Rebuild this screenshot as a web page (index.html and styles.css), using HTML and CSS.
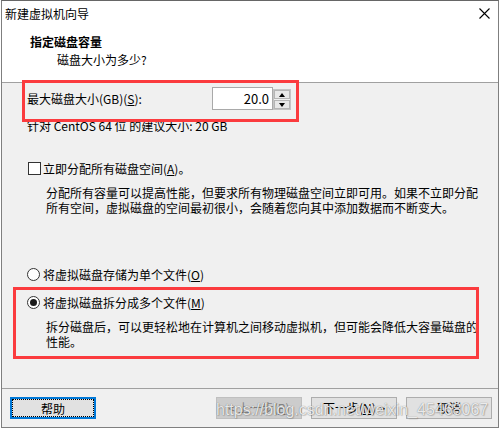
FILE: index.html
```html
<!DOCTYPE html>
<html lang="zh-CN">
<head>
<meta charset="utf-8">
<title>新建虚拟机向导</title>
<link rel="stylesheet" href="styles.css">
</head>
<body>
<div class="window">
  <div class="titlebar">
    <span class="title">新建虚拟机向导</span>
    <svg class="close" width="11" height="11" viewBox="0 0 11 11"><path d="M0.5 0.5L10.5 10.5M10.5 0.5L0.5 10.5" stroke="#000" stroke-width="1.1" fill="none"/></svg>
  </div>
  <div class="header">
    <div class="heading">指定磁盘容量</div>
    <div class="subheading">磁盘大小为多少?</div>
  </div>
  <div class="content">
    <div class="size-row">
      <span class="size-label">最大磁盘大小(GB)(<u>S</u>):</span>
      <div class="spin-input">20.0</div>
      <div class="spin-buttons">
        <div class="spin-btn"><span class="arrow-up"></span></div>
        <div class="spin-btn"><span class="arrow-down"></span></div>
      </div>
    </div>
    <div class="hint">针对 CentOS 64 位 的建议大小: 20 GB</div>
    <div class="option check-option"><span class="checkbox"></span><span>立即分配所有磁盘空间(<u>A</u>)。</span></div>
    <p class="desc">分配所有容量可以提高性能，但要求所有物理磁盘空间立即可用。如果不立即分配<br>所有空间，虚拟磁盘的空间最初很小，会随着您向其中添加数据而不断变大。</p>
    <div class="option radio-option first-radio"><span class="radio"></span><span>将虚拟磁盘存储为单个文件(<u>O</u>)</span></div>
    <div class="option radio-option second-radio"><span class="radio checked"></span><span>将虚拟磁盘拆分成多个文件(<u>M</u>)</span></div>
    <p class="desc">拆分磁盘后，可以更轻松地在计算机之间移动虚拟机，但可能会降低大容量磁盘的<br>性能。</p>
  </div>
  <div class="footer">
    <button class="btn btn-help" type="button">帮助</button>
    <div class="nav-buttons">
      <button class="btn btn-disabled" type="button">&lt; 上一步(<u>B</u>)</button>
      <button class="btn" type="button">下一步(<u>N</u>) &gt;</button>
      <button class="btn" type="button">取消</button>
    </div>
  </div>
  <div class="mark mark-size"></div>
  <div class="mark mark-split"></div>
  <div class="watermark">https://blog.csdn.net/weixin_45468067</div>
</div>
</body>
</html>
```

FILE: styles.css
```css
* {
  box-sizing: border-box;
}

html, body {
  margin: 0;
  padding: 0;
  background: #ffffff;
}

body {
  font-family: "Noto Sans CJK SC", "Microsoft YaHei", sans-serif;
  font-size: 12px;
  color: #000;
}

.window {
  position: relative;
  margin-left: 1px;
  width: 498px;
  height: 428px;
  border: 1px solid #7f7f7f;
  border-top-color: #666666;
  display: flex;
  flex-direction: column;
  background: #f0f0f0;
}

.titlebar {
  height: 27px;
  flex: none;
  display: flex;
  align-items: center;
  justify-content: space-between;
  padding: 0 8px 0 3px;
  background: #fff;
  line-height: 25px;
}

.title {
  margin-top: -2px;
}

.close {
  display: block;
  margin-top: -2px;
}

.header {
  height: 55px;
  flex: none;
  background: #fff;
  border-bottom: 1px solid #a0a0a0;
  padding: 5px 0 0 28px;
}

.heading {
  font-weight: bold;
  line-height: 18px;
}

.subheading {
  line-height: 18px;
  padding-left: 27px;
}

.content {
  height: 305px;
  flex: none;
  padding: 4px 0 0 25px;
}

.size-row {
  display: flex;
  align-items: flex-start;
  height: 23px;
}

.size-label {
  width: 185px;
  line-height: 23px;
}

.spin-input {
  width: 61px;
  height: 23px;
  border: 1px solid #a9a9a9;
  background: #fff;
  text-align: right;
  padding-right: 3px;
  line-height: 21px;
  font-size: 13px;
}

.spin-buttons {
  margin-top: 2px;
  width: 18px;
  height: 21px;
  border: 1px solid #c4c4c4;
  padding: 0;
  display: flex;
  flex-direction: column;
  gap: 1px;
  background: #f0f0f0;
}

.spin-btn {
  flex: 1;
  border: 1px solid #b5b5b5;
  background: #e8e8e8;
  display: flex;
  align-items: center;
  justify-content: center;
}

.arrow-up {
  width: 0;
  height: 0;
  border-left: 3.5px solid transparent;
  border-right: 3.5px solid transparent;
  border-bottom: 4px solid #000;
}

.arrow-down {
  width: 0;
  height: 0;
  border-left: 3.5px solid transparent;
  border-right: 3.5px solid transparent;
  border-top: 4px solid #000;
}

.hint {
  margin-top: 8px;
  line-height: 15px;
}

.option {
  display: flex;
  align-items: center;
  height: 15px;
  line-height: 15px;
}

.check-option {
  margin-top: 28px;
}

.checkbox {
  width: 13px;
  height: 13px;
  margin-left: 1px;
  margin-right: 2px;
  border: 1px solid #333;
  background: #fff;
}

.radio {
  width: 13px;
  height: 13px;
  margin-right: 3px;
  border: 1px solid #333;
  border-radius: 50%;
  background: #fff;
  display: flex;
  align-items: center;
  justify-content: center;
}

.radio.checked::after {
  content: "";
  width: 7px;
  height: 7px;
  border-radius: 50%;
  background: #1a1a1a;
}

.first-radio {
  margin-top: 52px;
}

.second-radio {
  margin-top: 13px;
}

.desc {
  margin: 9px 0 0 19px;
  line-height: 15px;
  white-space: nowrap;
}

.footer {
  flex: 1;
  border-top: 1px solid #a0a0a0;
  display: flex;
  align-items: flex-start;
  padding: 8px 6px 0 8px;
}

.nav-buttons {
  margin-left: auto;
  display: flex;
  gap: 9px;
}

.btn {
  width: 86px;
  height: 22px;
  padding: 0;
  margin: 0;
  border: 1px solid #adadad;
  background: #e1e1e1;
  font-family: inherit;
  font-size: 12px;
  line-height: 20px;
  color: #000;
  text-align: center;
}

.btn-help {
  border: 2px solid #0078d7;
  outline: 1px dotted #000;
  outline-offset: -3px;
}

.btn-disabled {
  background: #cccccc;
  border-color: #bfbfbf;
  color: #838383;
}

.mark {
  position: absolute;
  border: 3px solid #fb3b3e;
}

.mark-size {
  left: 20px;
  top: 79px;
  width: 277px;
  height: 42px;
}

.mark-split {
  left: 11px;
  top: 286px;
  width: 466px;
  height: 72px;
}

.watermark {
  position: absolute;
  left: 214px;
  top: 400px;
  font-family: "Liberation Sans", Arial, sans-serif;
  font-size: 16px;
  line-height: 18px;
  color: rgba(255, 255, 255, 0.85);
  text-shadow: 0 0 1px rgba(0, 0, 0, 0.5), 1px 1px 1px rgba(0, 0, 0, 0.15);
  white-space: nowrap;
  pointer-events: none;
}
```
